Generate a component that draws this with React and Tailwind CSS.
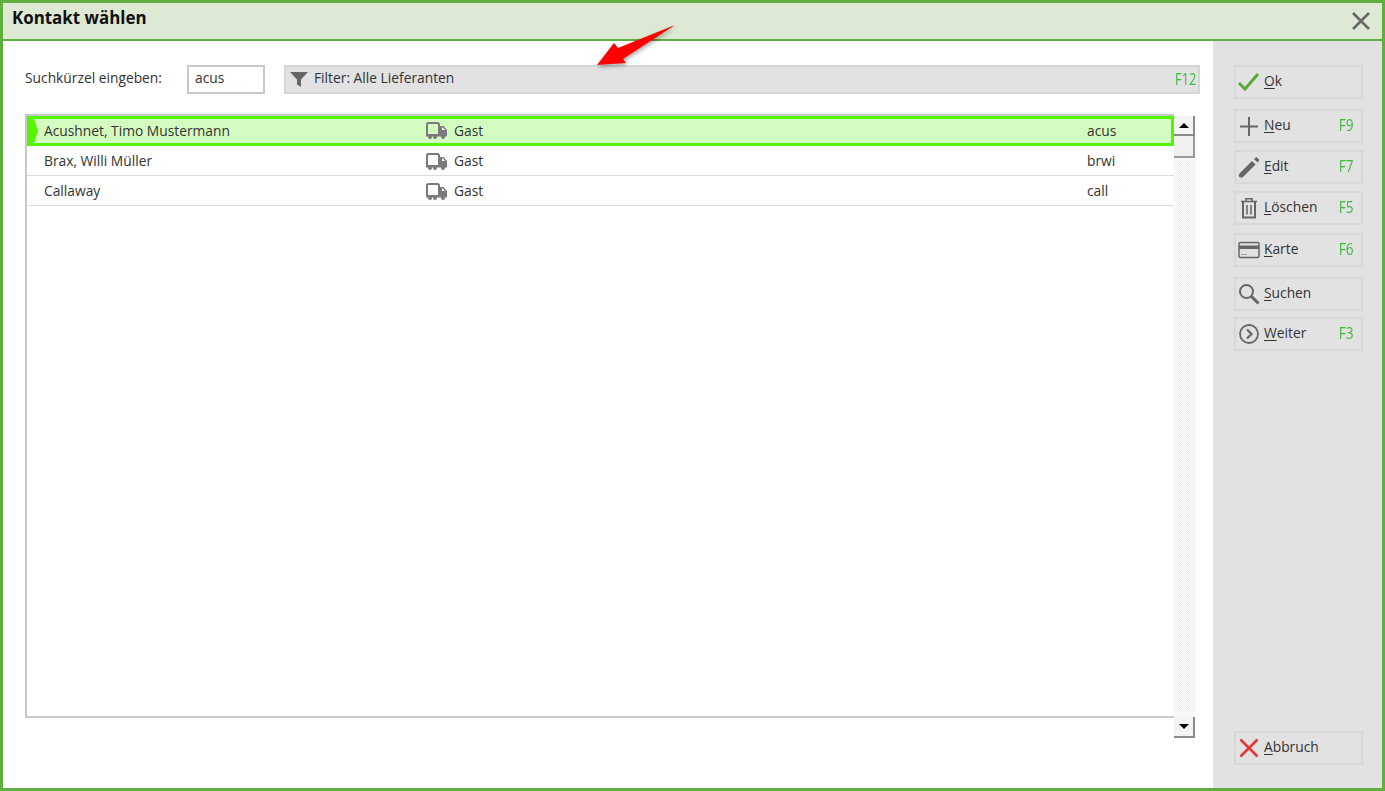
import React from 'react';

const rows = [
  { name: 'Acushnet, Timo Mustermann', type: 'Gast', code: 'acus', selected: true },
  { name: 'Brax, Willi Müller', type: 'Gast', code: 'brwi' },
  { name: 'Callaway', type: 'Gast', code: 'call' },
];

const TruckIcon = () => (
  <svg width="21" height="17" viewBox="0 0 21 17" className="shrink-0 mb-[1px]">
    <rect x="1" y="1" width="12" height="12" rx="1.500" fill="none" stroke="#7a7a7a" strokeWidth="2" />
    <path d="M14 4h3.500L21 8v6h-7z" fill="#7a7a7a" />
    <rect x="0" y="12.500" width="21" height="2" fill="#7a7a7a" />
    <circle cx="4" cy="15" r="2" fill="#7a7a7a" />
    <circle cx="9" cy="15" r="2" fill="#7a7a7a" />
    <circle cx="17" cy="15" r="2" fill="#7a7a7a" />
    <path d="M16 5.500h1l2 2.500h-3z" fill="#fff" />
  </svg>
);

const icons = {
  ok: (
    <svg width="24" height="24" viewBox="0 0 24 24">
      <path d="M2 13l6 6L21 4" fill="none" stroke="#5aa83c" strokeWidth="3" />
    </svg>
  ),
  neu: (
    <svg width="24" height="24" viewBox="0 0 24 24">
      <path d="M12 3v19M3 12.500h18" fill="none" stroke="#666" strokeWidth="2" />
    </svg>
  ),
  edit: (
    <svg width="24" height="24" viewBox="0 0 24 24">
      <path d="M2.500 22c-1-1-1-2 0-3.500L15 6l3.500 3.500L6 22c-1.500 1-2.500 1-3.500 0z" fill="#666" />
      <path d="M17 4l2.500-2 3 3-2 2.500z" fill="#666" />
    </svg>
  ),
  loeschen: (
    <svg width="24" height="24" viewBox="0 0 24 24" fill="none" stroke="#666" strokeWidth="1.500">
      <path d="M4 5.500h16M9 5V2.800h6V5" />
      <path d="M6 6v15.500h12V6" strokeWidth="2" />
      <path d="M10 9v9.500M14 9v9.500" />
    </svg>
  ),
  karte: (
    <svg width="24" height="24" viewBox="0 0 24 24">
      <rect x="2" y="4.500" width="20" height="15" rx="1.500" fill="none" stroke="#666" strokeWidth="1.500" />
      <rect x="2" y="7.500" width="20" height="3.500" fill="#666" />
      <path d="M4.500 16.500h1M6.500 16.500h1M8.500 16.500h1" stroke="#666" strokeWidth="1" />
    </svg>
  ),
  suchen: (
    <svg width="24" height="24" viewBox="0 0 24 24" fill="none" stroke="#666">
      <circle cx="9.500" cy="9.500" r="6.500" strokeWidth="2" />
      <path d="M14.500 14.500l7 7" strokeWidth="3" />
    </svg>
  ),
  weiter: (
    <svg width="24" height="24" viewBox="0 0 24 24" fill="none" stroke="#666">
      <circle cx="12" cy="12" r="9" strokeWidth="1.800" />
      <path d="M10 7.500l4.500 4.500-4.500 4.500" strokeWidth="2.200" />
    </svg>
  ),
  abbruch: (
    <svg width="24" height="24" viewBox="0 0 24 24">
      <path d="M3.500 3.500l17 17M20.500 3.500l-17 17" fill="none" stroke="#e2383c" strokeWidth="2.600" />
    </svg>
  ),
};

const SideButton = ({ icon, mnemonic, rest, fkey, className = '' }) => (
  <button className={`flex items-center w-[129px] h-[34px] pl-[1px] pr-[8px] border-2 border-[#d8d8d8] text-[13.8px] text-[#333] ${className}`}>
    <span className="w-[24px] shrink-0">{icons[icon]}</span>
    <span className="ml-[3px] mb-[1px]"><u className="underline-offset-2">{mnemonic}</u>{rest}</span>
    {fkey && <span className="ml-auto mb-[3px] text-[17px] leading-none origin-right scale-x-[0.8] text-[#3db83d]">{fkey}</span>}
  </button>
);

const App = () => {
  return (
    <div className="relative flex flex-col w-[1385px] h-[791px] bg-white border-[3px] border-[#5fae3f] font-['Open_Sans',sans-serif] text-[13.8px] text-[#333] overflow-hidden">
      {/* Title bar */}
      <div className="flex items-center justify-between h-[38px] shrink-0 pl-[9px] pr-[11px] bg-[#dde9d3] border-b-2 border-[#5fae3f]">
        <span className="mb-[6px] text-[16.9px] font-bold text-[#111]">Kontakt wählen</span>
        <svg width="20" height="20" viewBox="0 0 20 20">
          <path d="M2 2l16 16M18 2L2 18" fill="none" stroke="#666" strokeWidth="2.500" />
        </svg>
      </div>

      <div className="flex flex-1 min-h-0">
        {/* Main area */}
        <div className="flex-1 min-w-0 pt-[24px] pl-[22px] pr-[13px]">
          <div className="flex items-center h-[29px]">
            <span className="w-[162px] shrink-0 pb-[2px]">Suchkürzel eingeben:</span>
            <div className="flex items-center w-[78px] h-[29px] shrink-0 pl-[6px] pb-[3px] border-2 border-[#c8c8c8] bg-white">acus</div>
            <div className="flex items-center flex-1 h-[29px] ml-[19px] pl-[4px] pr-[2px] bg-[#e2e2e2] border-2 border-[#d6d6d6]">
              <svg width="18" height="16" viewBox="0 0 18 16" className="shrink-0 mb-[2px]">
                <path d="M0 1h18l-7 7.500V16l-4-2.500V8.500z" fill="#666" />
              </svg>
              <span className="ml-[6px] mb-[2px]">Filter: Alle Lieferanten</span>
              <span className="ml-auto mb-[3px] text-[17px] leading-none origin-right scale-x-[0.75] text-[#3db83d]">F12</span>
            </div>
          </div>

          <div className="flex mt-[20px]">
            <div className="w-[1149px] h-[604px] shrink-0 border-2 border-r-0 border-[#c8c8c8] bg-white">
              {rows.map((row) =>
                <div
                  key={row.code}
                  className={`relative flex items-center h-[30px] pl-[17px] ${
                    row.selected ? 'bg-[#d4fcc0] border-[3px] border-l-0 border-[#55f500]' : 'pt-[2px] border-b border-[#dcdcdc]'
                  }`}
                >
                  {row.selected && (
                    <svg width="12" height="24" viewBox="0 0 12 24" className="absolute left-0 top-0">
                      <path d="M0 0h7l4 12-4 12H0z" fill="#55f500" />
                    </svg>
                  )}
                  <span className="w-[382px] shrink-0">{row.name}</span>
                  <TruckIcon />
                  <span className="ml-[7px] w-[633px] shrink-0">{row.type}</span>
                  <span>{row.code}</span>
                </div>
              )}
            </div>

            {/* Scrollbar */}
            <div className="flex flex-col w-[21px] h-[622px] mt-[2px] shrink-0 bg-[repeating-conic-gradient(#efefef_0_25%,#fff_0_50%)] bg-[length:2px_2px]">
              <div className="flex items-center justify-center h-[20px] bg-[#f4f4f4] border-r-2 border-b-2 border-[#8a8a8a]">
                <div className="w-0 h-0 border-x-[5px] border-x-transparent border-b-[5px] border-b-black" />
              </div>
              <div className="h-[22px] bg-[#f0f0f0] border-r-2 border-b-2 border-[#9a9a9a]" />
              <div className="flex items-center justify-center h-[21px] mt-auto bg-[#f4f4f4] border-r-2 border-b-2 border-[#8a8a8a]">
                <div className="w-0 h-0 border-x-[5px] border-x-transparent border-t-[5px] border-t-black" />
              </div>
            </div>
          </div>
        </div>

        {/* Right button column */}
        <div className="flex flex-col w-[169px] shrink-0 pt-[24px] pl-[21px] bg-[#e2e2e2]">
          <SideButton icon="ok" mnemonic="O" rest="k" />
          <SideButton icon="neu" mnemonic="N" rest="eu" fkey="F9" className="mt-[10px]" />
          <SideButton icon="edit" mnemonic="E" rest="dit" fkey="F7" className="mt-[7px]" />
          <SideButton icon="loeschen" mnemonic="L" rest="öschen" fkey="F5" className="mt-[7px]" />
          <SideButton icon="karte" mnemonic="K" rest="arte" fkey="F6" className="mt-[8px]" />
          <SideButton icon="suchen" mnemonic="S" rest="uchen" className="mt-[10px]" />
          <SideButton icon="weiter" mnemonic="W" rest="eiter" fkey="F3" className="mt-[6px]" />
          <SideButton icon="abbruch" mnemonic="A" rest="bbruch" className="mt-auto mb-[23px]" />
        </div>
      </div>

      {/* Red annotation arrow */}
      <svg width="90" height="50" viewBox="0 0 90 50" className="absolute left-[592px] top-[19px] drop-shadow-[1px_2px_2px_rgba(0,0,0,0.35)]">
        <path d="M80 3L23 26 19 21 2 43 31 41 28 37z" fill="#ff0000" />
      </svg>
    </div>
  );
};

export default App;
